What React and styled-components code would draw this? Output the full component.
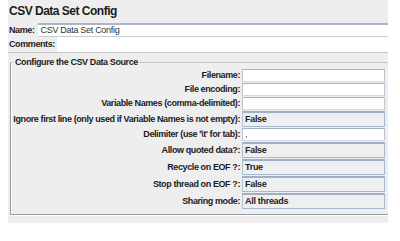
import React from 'react';
import styled, { createGlobalStyle } from 'styled-components';

const GlobalStyle = createGlobalStyle`
  body {
    margin: 0;
    background: #ffffff;
    font-family: 'Liberation Sans', Arial, sans-serif;
  }
`;

const rows = [
  { label: 'Filename:', kind: 'text', value: '' },
  { label: 'File encoding:', kind: 'text', value: '' },
  { label: 'Variable Names (comma-delimited):', kind: 'text', value: '' },
  { label: 'Ignore first line (only used if Variable Names is not empty):', kind: 'combo', value: 'False' },
  { label: "Delimiter (use '\\t' for tab):", kind: 'text', value: ',' },
  { label: 'Allow quoted data?:', kind: 'combo', value: 'False' },
  { label: 'Recycle on EOF ?:', kind: 'combo', value: 'True' },
  { label: 'Stop thread on EOF ?:', kind: 'combo', value: 'False' },
  { label: 'Sharing mode:', kind: 'combo', value: 'All threads' },
];

const App = () => {
  return (
    <>
      <GlobalStyle />
      <Panel>
        <Title>CSV Data Set Config</Title>
        <NameRow>
          <Label>Name:</Label>
          <TextField>CSV Data Set Config</TextField>
        </NameRow>
        <CommentsRow>
          <Label>Comments:</Label>
          <CommentArea />
        </CommentsRow>
        <Group>
          <Legend>Configure the CSV Data Source</Legend>
          <Grid>
            {rows.map((row) => (
              <React.Fragment key={row.label}>
                <FieldLabel combo={row.kind === 'combo'}>{row.label}</FieldLabel>
                {row.kind === 'combo' ? (
                  <Combo>{row.value}</Combo>
                ) : (
                  <Input>{row.value}</Input>
                )}
              </React.Fragment>
            ))}
          </Grid>
        </Group>
      </Panel>
    </>
  );
};

const Panel = styled.div`
  margin-left: 8px;
  width: 380px;
  height: 223px;
  background: #eeeeee;
  overflow: hidden;
  display: flex;
  flex-direction: column;
  color: #1c1c1c;
`;

const Title = styled.div`
  height: 23px;
  padding-left: 1px;
  font-size: 12px;
  font-weight: bold;
  letter-spacing: -0.5px;
  line-height: 23px;
`;

const Label = styled.span`
  font-size: 9px;
  font-weight: bold;
  letter-spacing: -0.4px;
  padding-left: 1px;
  white-space: nowrap;
`;

const NameRow = styled.div`
  display: flex;
  align-items: center;
  gap: 3px;
  height: 14px;
`;

const TextField = styled.div`
  flex: 1;
  height: 11px;
  background: #ffffff;
  border-top: 2px solid #a9b8c9;
  border-bottom: 1px solid #c3cdd9;
  font-size: 9px;
  line-height: 11px;
  letter-spacing: -0.3px;
  padding-left: 3px;
  color: #333;
`;

const CommentsRow = styled.div`
  display: flex;
  align-items: stretch;
  height: 15px;
  border-bottom: 1px solid #c4c4c4;
  ${Label} {
    line-height: 15px;
  }
`;

const CommentArea = styled.div`
  flex: 1;
  margin-left: 2px;
  background: #ffffff;
`;

const Group = styled.fieldset`
  margin: 4px 0 0 2px;
  padding: 2px 0 5px 0;
  border: none;
  border-top: 1px solid #c6c6c6;
  border-left: 1px solid #9c9c9c;
  border-bottom: 1px solid #9c9c9c;
  box-shadow: inset 1px 0 0 #ffffff, 0 1px 0 #ffffff;
  min-width: 0;
  width: 380px;
`;

const Legend = styled.legend`
  padding: 0 2px;
  margin-left: 2px;
  font-size: 9px;
  font-weight: bold;
  letter-spacing: -0.4px;
  line-height: 10px;
`;

const Grid = styled.div`
  display: grid;
  grid-template-columns: 229px 143px;
  column-gap: 2px;
  row-gap: 1px;
  align-items: center;
`;

const FieldLabel = styled.div`
  text-align: right;
  font-size: 9px;
  font-weight: bold;
  letter-spacing: -0.4px;
  white-space: nowrap;
  line-height: ${(p) => (p.combo ? '16px' : '13px')};
`;

const Input = styled.div`
  height: 11px;
  background: #ffffff;
  border-top: 1px solid #a3b1c2;
  border-left: 1px solid #b8c4d2;
  border-right: 1px solid #b8c4d2;
  border-bottom: 1px solid #d5dce5;
  font-size: 9px;
  line-height: 11px;
  padding-left: 2px;
  color: #444;
`;

const Combo = styled.div`
  height: 13px;
  background: #eeeff1;
  border-top: 2px solid #9eb0c5;
  border-left: 1px solid #b3c1d1;
  border-right: 1px solid #a9b9cc;
  border-bottom: 1px solid #a9b9cc;
  font-size: 9px;
  font-weight: bold;
  letter-spacing: -0.3px;
  line-height: 13px;
  padding-left: 2px;
  color: #222;
`;

export default App;
